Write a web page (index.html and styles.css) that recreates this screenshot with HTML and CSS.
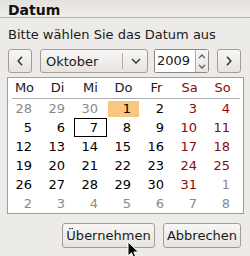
FILE: index.html
```html
<!DOCTYPE html>
<html lang="de">
<head>
<meta charset="utf-8">
<title>Datum</title>
<link rel="stylesheet" href="styles.css">
</head>
<body>
<div class="title">Datum</div>
<div class="prompt">Bitte wählen Sie das Datum aus</div>
<div class="nav">
  <div class="btn nav-btn"><svg width="6" height="10" viewBox="0 0 6 10"><path d="M5 0.8 L1.2 5 L5 9.2" fill="none" stroke="#3a3a3a" stroke-width="1.6"/></svg></div>
  <div class="combo">
    <span class="combo-text">Oktober</span>
    <span class="combo-sep"></span>
    <span class="combo-arrow"><svg width="10" height="6" viewBox="0 0 10 6"><path d="M1 1 L5 5 L9 1" fill="none" stroke="#3a3a3a" stroke-width="1.5"/></svg></span>
  </div>
  <div class="spin">
    <span class="spin-entry">2009</span>
    <span class="spin-btns">
      <svg width="8" height="5" viewBox="0 0 8 5"><path d="M1 4.2 L4 1 L7 4.2" fill="none" stroke="#555" stroke-width="1.2"/></svg>
      <svg width="8" height="5" viewBox="0 0 8 5"><path d="M1 0.8 L4 4 L7 0.8" fill="none" stroke="#555" stroke-width="1.2"/></svg>
    </span>
  </div>
  <div class="btn nav-btn"><svg width="6" height="10" viewBox="0 0 6 10"><path d="M1 0.8 L4.8 5 L1 9.2" fill="none" stroke="#3a3a3a" stroke-width="1.6"/></svg></div>
</div>
<div class="cal">
  <div class="hd">Mo</div><div class="hd">Di</div><div class="hd">Mi</div><div class="hd">Do</div><div class="hd">Fr</div><div class="hd we">Sa</div><div class="hd we">So</div>
  <div class="sep"></div>
  <div class="d o">28</div><div class="d o">29</div><div class="d o">30</div><div class="d sel">1</div><div class="d">2</div><div class="d we">3</div><div class="d we">4</div>
  <div class="d">5</div><div class="d">6</div><div class="d focus">7</div><div class="d">8</div><div class="d">9</div><div class="d we">10</div><div class="d we">11</div>
  <div class="d">12</div><div class="d">13</div><div class="d">14</div><div class="d">15</div><div class="d">16</div><div class="d we">17</div><div class="d we">18</div>
  <div class="d">19</div><div class="d">20</div><div class="d">21</div><div class="d">22</div><div class="d">23</div><div class="d we">24</div><div class="d we">25</div>
  <div class="d">26</div><div class="d">27</div><div class="d">28</div><div class="d">29</div><div class="d">30</div><div class="d we">31</div><div class="d o">1</div>
  <div class="d o">2</div><div class="d o">3</div><div class="d o">4</div><div class="d o">5</div><div class="d o">6</div><div class="d o">7</div><div class="d o">8</div>
</div>
<div class="actions">
  <div class="btn act ok">Übernehmen</div>
  <div class="btn act cancel">Abbrechen</div>
  <svg class="cursor" width="13" height="19" viewBox="0 0 13 19"><path d="M1 1 L1 15 L4.5 11.8 L7 17.5 L9.2 16.5 L6.8 11 L11.5 11 Z" fill="#000" stroke="#fff" stroke-width="1"/></svg>
</div>
</body>
</html>
```
FILE: styles.css
```css
html, body {
  margin: 0;
  padding: 0;
}
body {
  width: 250px;
  height: 256px;
  overflow: hidden;
  background: #edebe8;
  font-family: "DejaVu Sans", sans-serif;
  font-size: 13px;
  color: #1a1a1a;
  position: relative;
}
.title {
  height: 15px;
  padding: 2px 8px 0;
  line-height: 16px;
  font-size: 14px;
  font-weight: bold;
  color: #111;
  background: linear-gradient(#e4e1dc, #f1efec);
  border-bottom: 1px solid #b8b0a6;
}
.prompt {
  margin-top: 9px;
  padding-left: 8px;
  line-height: 15px;
}
.nav {
  display: flex;
  height: 24px;
  margin-top: 7px;
  padding-left: 8px;
}
.btn {
  box-sizing: border-box;
  border: 1px solid #a49d95;
  border-radius: 3px;
  background: linear-gradient(#f8f7f6, #e7e4e0);
  display: flex;
  align-items: center;
  justify-content: center;
}
.nav-btn {
  width: 24px;
  height: 24px;
}
.nav-btn + .combo { margin-left: 8px; }
.combo {
  box-sizing: border-box;
  width: 108px;
  height: 24px;
  border: 1px solid #a49d95;
  border-radius: 3px;
  background: linear-gradient(#f8f7f6, #e7e4e0);
  display: flex;
  align-items: center;
}
.combo-text {
  flex: 1;
  padding-left: 5px;
  line-height: 15px;
}
.combo-sep {
  width: 1px;
  height: 16px;
  background: #b3aca4;
}
.combo-arrow {
  width: 23px;
  display: flex;
  justify-content: center;
  padding-left: 1px;
}
.spin {
  box-sizing: border-box;
  margin-left: 6px;
  width: 55px;
  height: 24px;
  border: 1px solid #8e8882;
  border-radius: 2px 3px 3px 2px;
  display: flex;
  margin-right: 8px;
}
.spin-entry {
  width: 40px;
  background: #fff;
  padding-left: 2px;
  box-sizing: border-box;
  line-height: 22px;
}
.spin-btns {
  flex: 1;
  display: flex;
  flex-direction: column;
  justify-content: space-between;
  align-items: center;
  padding: 4px 0 3px;
  background: linear-gradient(#f8f7f6, #e7e4e0);
  border-left: 1px solid #b3aca4;
}
.cal {
  box-sizing: border-box;
  margin: 4px 0 0 7px;
  width: 237px;
  height: 137px;
  border: 1px solid #a39c94;
  background: #fff;
  display: grid;
  grid-template-columns: repeat(7, 33px);
  grid-template-rows: 20px 1px repeat(6, 19px);
  align-content: start;
}
.hd {
  text-align: center;
  line-height: 20px;
  color: #1a1a1a;
}
.hd.we { color: #8b0a0a; }
.sep {
  grid-column: 1 / -1;
  margin: 0 -1px 0 4px;
  background: #b0b0b0;
}
.d {
  text-align: right;
  padding-right: 9px;
  line-height: 19px;
  color: #000;
}
.d.we { color: #8b0a0a; }
.d.o { color: #8a8a8a; }
.d.sel {
  background: linear-gradient(#f8c87e, #f8c87e) 1px 2px / 31px 16px no-repeat;
}
.d.focus {
  box-shadow: inset 0 0 0 1px #000;
}
.actions {
  display: flex;
  justify-content: flex-end;
  gap: 8px;
  margin-top: 9px;
  padding-right: 9px;
  position: relative;
}
.act {
  height: 25px;
  line-height: 15px;
}
.ok { width: 93px; }
.cancel { width: 78px; }
.cursor {
  position: absolute;
  left: 127px;
  top: 18px;
}
```
